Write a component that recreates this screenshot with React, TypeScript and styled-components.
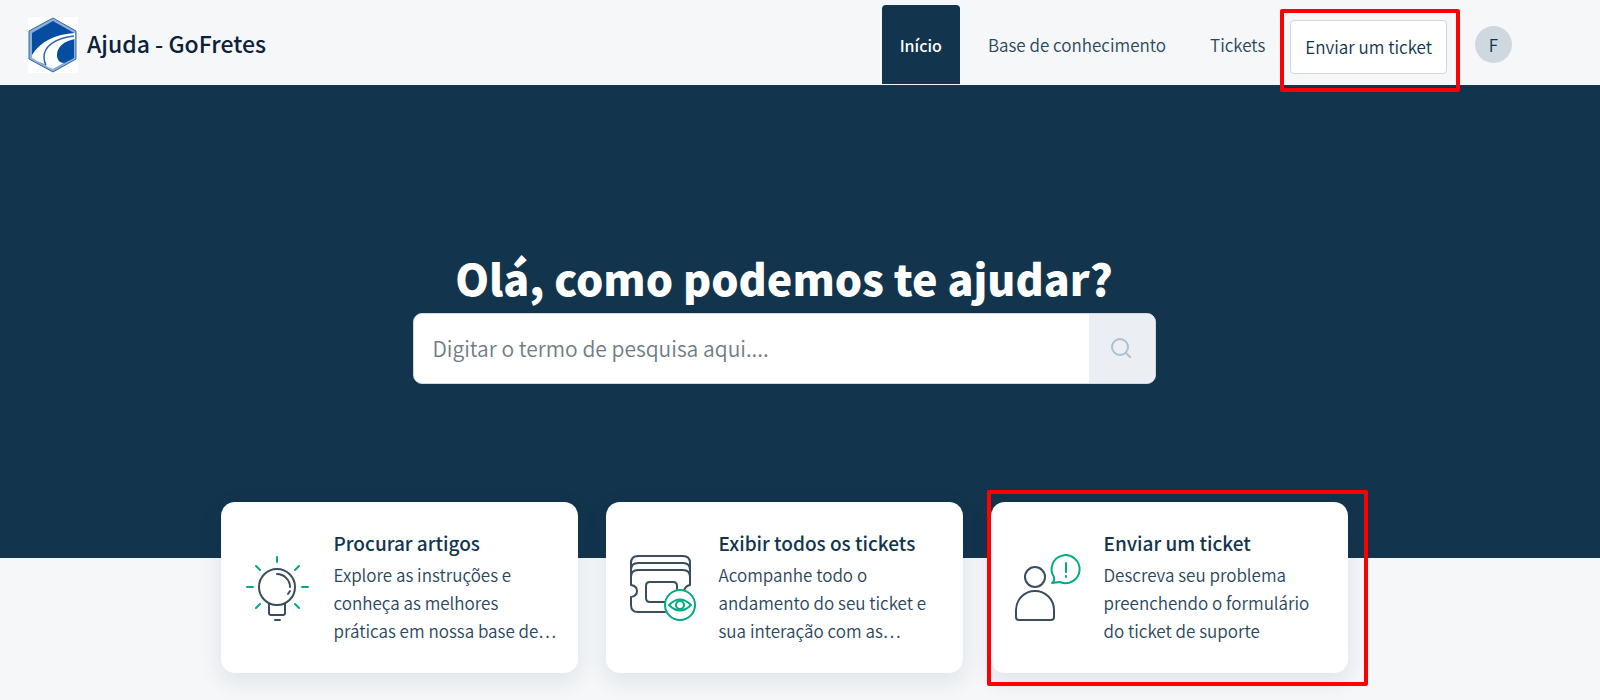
import React from "react";
import styled, { createGlobalStyle, css } from "styled-components";

const navy = "#12344d";
const ink = "#3a4d5f";
const green = "#05a983";

const GlobalStyle = createGlobalStyle`
  *, *::before, *::after { box-sizing: border-box; }
  body {
    margin: 0;
    background: #f5f7f9;
    color: ${navy};
    font-family: "Noto Sans CJK JP", "Noto Sans CJK SC", "Open Sans", sans-serif;
    font-size: 17px;
    font-weight: 350;
    line-height: 28px;
  }
  a { color: inherit; text-decoration: none; }
  button, input { font: inherit; color: inherit; }
  h1, h2, p { margin: 0; }
`;

const Header = styled.header`
  display: flex;
  align-items: center;
  justify-content: space-between;
  height: 85px;
  padding: 4px 88px 0 28px;
`;

const Brand = styled.a`
  display: flex;
  align-items: center;
  gap: 9px;
  color: #0b2238;
  font-size: 23px;
  font-weight: 500;
`;

const BrandName = styled.span`
  padding-bottom: 4px;
`;

const LogoSvg = styled.svg`
  display: block;
  width: 50px;
  height: 56px;
`;

const Nav = styled.nav`
  display: flex;
  align-items: center;
  align-self: stretch;
`;

const NavLink = styled.a<{ $active?: boolean }>`
  display: flex;
  align-items: center;
  padding: 0 22px;
  color: #2b475c;
  ${(p) =>
    p.$active &&
    css`
      align-self: stretch;
      margin: 1px 6px 1px 0;
      padding: 0 18px;
      border-radius: 4px 4px 0 0;
      background: ${navy};
      color: #fff;
      font-size: 16px;
      font-weight: 500;
    `}
`;

const Marked = styled.div<{ $inset: string }>`
  position: relative;
  display: flex;
  &::after {
    content: "";
    position: absolute;
    inset: ${(p) => p.$inset};
    border: 4px solid #fe0000;
    border-radius: 2px;
    pointer-events: none;
  }
`;

const NavAction = styled.div`
  margin-left: 3px;
  padding-top: 4px;
`;

const TicketButton = styled.button`
  height: 54px;
  margin: 0;
  padding: 1px 14px 0;
  border: 1px solid #cfd7df;
  border-radius: 4px;
  background: #fff;
`;

const Avatar = styled.button`
  width: 37px;
  height: 37px;
  margin-left: 28px;
  padding: 0;
  border: 0;
  border-radius: 50%;
  background: #cfd7df;
`;

const Hero = styled.section`
  display: flex;
  flex-direction: column;
  align-items: center;
  height: 473px;
  padding: 160px 32px 0 0;
  background: ${navy};
`;

const HeroTitle = styled.h1`
  padding-bottom: 4px;
  color: #fff;
  font-size: 43px;
  font-weight: 900;
  line-height: 64px;
`;

const SearchForm = styled.form`
  display: flex;
  width: 743px;
  max-width: 100%;
  height: 71px;
  border: 1px solid #cfd7df;
  border-radius: 9px;
  background: #fff;
  overflow: hidden;
`;

const SearchInput = styled.input`
  flex: 1;
  min-width: 0;
  padding: 0 19px 2px;
  border: 0;
  outline: 0;
  background: transparent;
  font-size: 21px;
  &::placeholder {
    color: #6f7c87;
    opacity: 1;
  }
`;

const SearchButton = styled.button`
  display: flex;
  align-items: center;
  justify-content: center;
  width: 66px;
  padding: 0 2px 2px 0;
  border: 0;
  background: #ebeef3;
`;

const Cards = styled.section`
  display: grid;
  grid-template-columns: repeat(3, minmax(0, 357px));
  justify-content: center;
  gap: 28px;
  margin-top: -56px;
  padding: 0 32px 27px 0;
`;

const Card = styled.a`
  display: flex;
  align-items: center;
  flex: 1;
  height: 171px;
  padding: 0 20px 0 24px;
  border-radius: 14px;
  background: #fff;
  box-shadow: 0 8px 24px rgba(18, 52, 77, 0.1);
`;

const CardIcon = styled.svg`
  flex: none;
  width: 66px;
  height: 66px;
  margin-right: 23px;
  fill: none;
  stroke: ${ink};
  stroke-width: 2;
  stroke-linecap: round;
  stroke-linejoin: round;
  overflow: visible;
`;

const CardBody = styled.div`
  padding-bottom: 2px;
`;

const CardTitle = styled.h2`
  margin-bottom: 4px;
  font-size: 19px;
  font-weight: 500;
  line-height: 28px;
`;

const CardText = styled.p`
  color: #2b475c;
`;

function Logo() {
  return (
    <LogoSvg viewBox="0 0 50 56" aria-hidden="true">
      <path d="M0 0h50v56H0z" fill="#fff" />
      <path d="M25 1 48 14v28L25 55 1 42V14z" fill="#8fafd6" stroke="#2f66ad" />
      <path d="M25 4 46 16v25L25 52 4 41V16z" fill="#044da1" />
      <path d="M4 38C12 25 27 17 47 16v6C36 24 29 30 29 38c0 5 3 8 7 8l-11 6-5-2-4-3-7-3-5-3z" fill="#fff" />
      <path d="M46 19C28 21 16 29 16 40c0 3 0 5 2 8" fill="none" stroke="#2f66ad" strokeWidth="1.500" />
    </LogoSvg>
  );
}

function BulbIcon() {
  return (
    <CardIcon viewBox="0 0 66 66" aria-hidden="true">
      <circle cx="32" cy="32" r="18" />
      <path d="M32 19c7 0 13 6 13 13M45 36l-2 3M24 49v9q0 2 2 2h12q2 0 2-2v-9M30 65h5" />
      <path stroke={green} d="M32 2v5M2 32h6M57 32h6M11 11l4 4M54 11l-4 4M11 53l4-4M54 53l-4-4" />
    </CardIcon>
  );
}

function TicketsIcon() {
  return (
    <CardIcon viewBox="0 0 66 66" aria-hidden="true">
      <path d="M1 30V8q0-7 7-7h45q7 0 7 7v22M1 15q0-7 7-7h45q7 0 7 7M1 22q0-7 7-7h45q7 0 7 7v8q-5 1-6 6M1 22v8q6 1 6 6t-6 6v8q0 7 7 7h27M36 47H20q-4 0-4-4V31q0-4 4-4h23q4 0 4 4v3" />
      <g stroke={green}>
        <circle cx="50" cy="50" r="15" fill="#fff" />
        <path d="M39 50q11-11 22 0-11 11-22 0z" />
        <circle cx="50" cy="50" r="4" />
      </g>
    </CardIcon>
  );
}

function PersonIcon() {
  return (
    <CardIcon viewBox="0 0 66 66" aria-hidden="true">
      <circle cx="20" cy="22" r="10" />
      <path d="M1 55a19 19 0 0 1 38 0v7q0 3-3 3H4q-3 0-3-3z" />
      <g stroke={green}>
        <path d="M39 22a14 14 0 1 1 6 5l-8 1q3-2 2-6z" />
        <path d="M51 8v9M51 21v1" />
      </g>
    </CardIcon>
  );
}

const cards = [
  {
    title: "Procurar artigos",
    text: "Explore as instruções e conheça as melhores práticas em nossa base de…",
    icon: <BulbIcon />,
  },
  {
    title: "Exibir todos os tickets",
    text: "Acompanhe todo o andamento do seu ticket e sua interação com as…",
    icon: <TicketsIcon />,
  },
  {
    title: "Enviar um ticket",
    text: "Descreva seu problema preenchendo o formulário do ticket de suporte",
    icon: <PersonIcon />,
    marked: true,
  },
];

export default function App() {
  return (
    <>
      <GlobalStyle />
      <Header>
        <Brand href="#">
          <Logo />
          <BrandName>Ajuda - GoFretes</BrandName>
        </Brand>
        <Nav>
          <NavLink href="#" $active>Início</NavLink>
          <NavLink href="#">Base de conhecimento</NavLink>
          <NavLink href="#">Tickets</NavLink>
          <NavAction>
            <Marked $inset="-11px -13px -18px -10px">
              <TicketButton type="button">Enviar um ticket</TicketButton>
            </Marked>
          </NavAction>
          <Avatar type="button">F</Avatar>
        </Nav>
      </Header>
      <main>
        <Hero>
          <HeroTitle>Olá, como podemos te ajudar?</HeroTitle>
          <SearchForm role="search">
            <SearchInput aria-label="Pesquisar" placeholder="Digitar o termo de pesquisa aqui...." />
            <SearchButton type="submit" aria-label="Buscar">
              <svg width="20" height="20" viewBox="0 0 20 20" fill="none" stroke="#afbfcc" strokeWidth="2" strokeLinecap="round">
                <circle cx="9" cy="9" r="8" />
                <path d="m15 15 4 4" />
              </svg>
            </SearchButton>
          </SearchForm>
        </Hero>
        <Cards>
          {cards.map((c) => {
            const card = (
              <Card href="#" key={c.title}>
                {c.icon}
                <CardBody>
                  <CardTitle>{c.title}</CardTitle>
                  <CardText>{c.text}</CardText>
                </CardBody>
              </Card>
            );
            return c.marked ? (
              <Marked key={c.title} $inset="-12px -20px -13px -4px">{card}</Marked>
            ) : (
              card
            );
          })}
        </Cards>
      </main>
    </>
  );
}
